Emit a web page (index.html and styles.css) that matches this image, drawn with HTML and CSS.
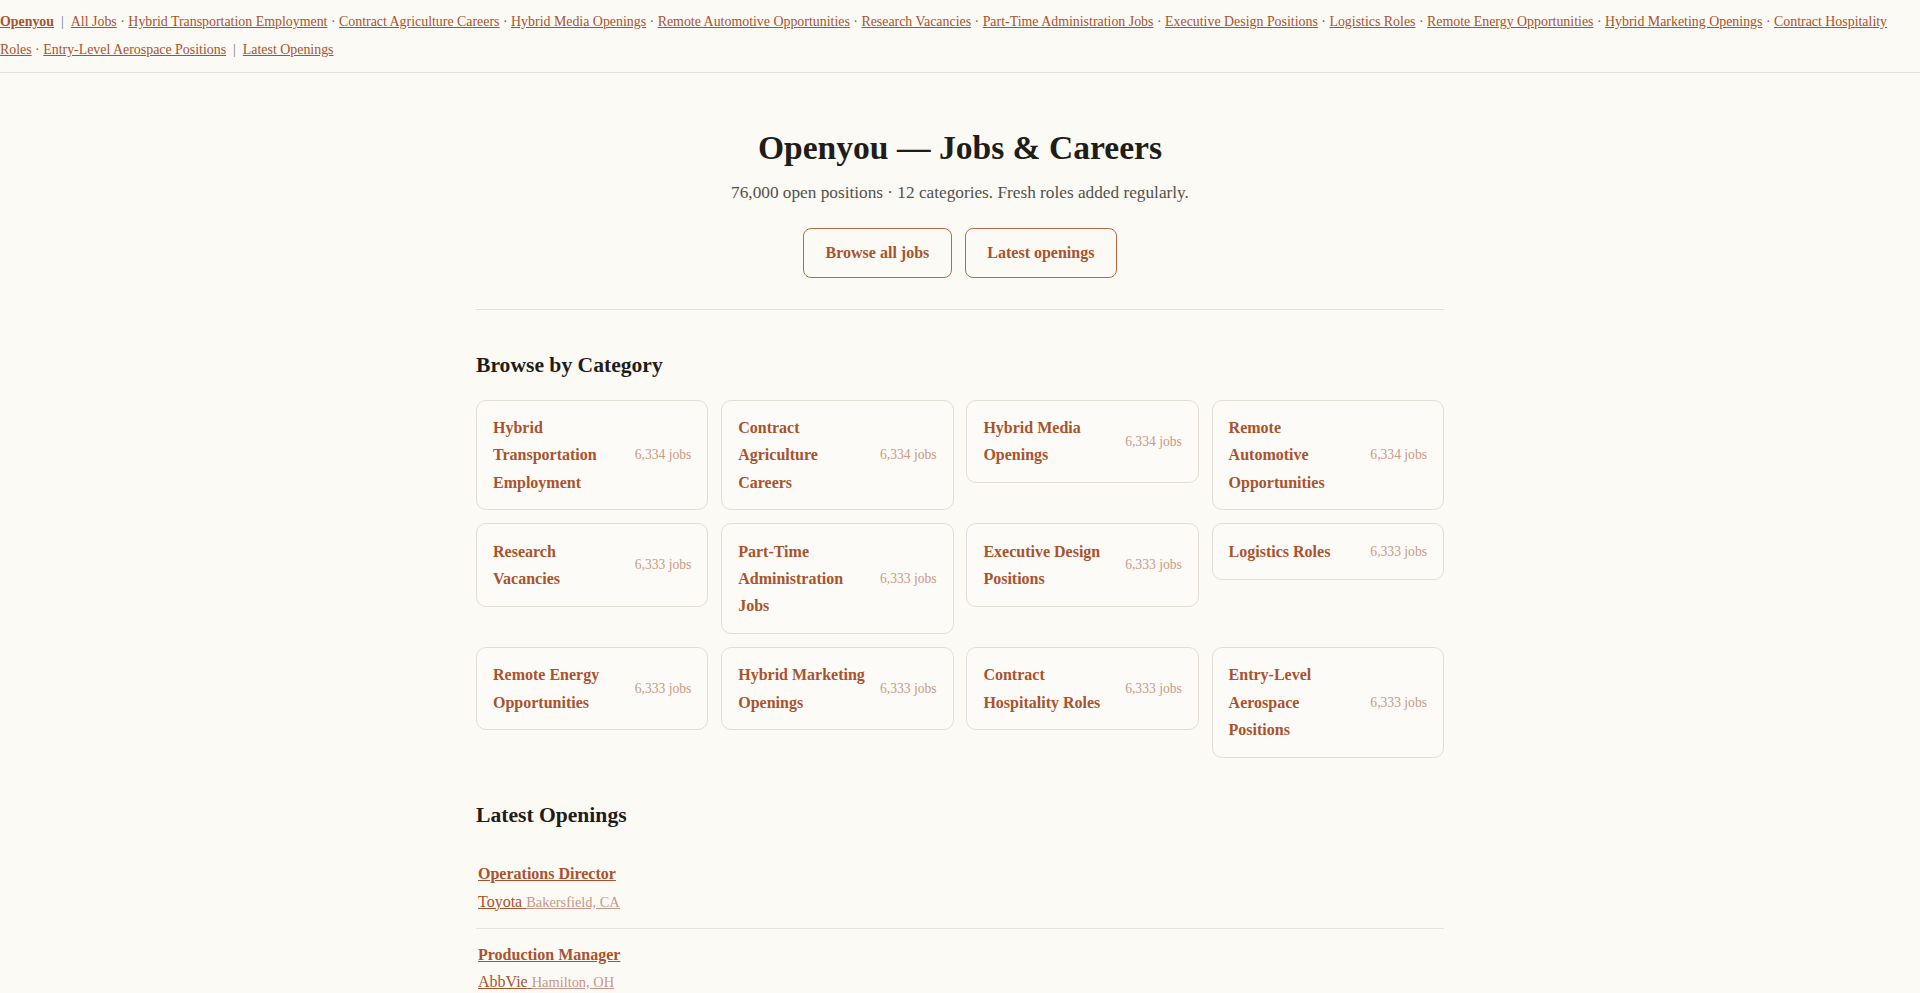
FILE: index.html
```html
<!DOCTYPE html>
<html lang="en">
<head>
<meta charset="utf-8">
<title>Openyou — Jobs &amp; Careers</title>
<link rel="stylesheet" href="styles.css">
</head>
<body>
<nav class="topnav"><a class="brand" href="#">Openyou</a><span class="sep">|</span><a href="#">All Jobs</a> · <a href="#">Hybrid Transportation Employment</a> · <a href="#">Contract Agriculture Careers</a> · <a href="#">Hybrid Media Openings</a> · <a href="#">Remote Automotive Opportunities</a> · <a href="#">Research Vacancies</a> · <a href="#">Part-Time Administration Jobs</a> · <a href="#">Executive Design Positions</a> · <a href="#">Logistics Roles</a> · <a href="#">Remote Energy Opportunities</a> · <a href="#">Hybrid Marketing Openings</a> · <a href="#">Contract Hospitality Roles</a> · <a href="#">Entry-Level Aerospace Positions</a><span class="sep">|</span><a href="#">Latest Openings</a></nav>

<main class="container">
  <header class="hero">
    <h1 class="hero-title">Openyou — Jobs &amp; Careers</h1>
    <p class="hero-sub">76,000 open positions · 12 categories. Fresh roles added regularly.</p>
    <div class="hero-actions">
      <a class="btn" href="#">Browse all jobs</a>
      <a class="btn" href="#">Latest openings</a>
    </div>
  </header>

  <section class="section">
    <h2 class="section-title">Browse by Category</h2>
    <div class="cat-grid">
      <a class="cat" href="#"><span class="cat-name">Hybrid Transportation Employment</span><span class="cat-count">6,334 jobs</span></a>
      <a class="cat" href="#"><span class="cat-name">Contract Agriculture Careers</span><span class="cat-count">6,334 jobs</span></a>
      <a class="cat" href="#"><span class="cat-name">Hybrid Media Openings</span><span class="cat-count">6,334 jobs</span></a>
      <a class="cat" href="#"><span class="cat-name">Remote Automotive Opportunities</span><span class="cat-count">6,334 jobs</span></a>
      <a class="cat" href="#"><span class="cat-name">Research Vacancies</span><span class="cat-count">6,333 jobs</span></a>
      <a class="cat" href="#"><span class="cat-name">Part-Time Administration Jobs</span><span class="cat-count">6,333 jobs</span></a>
      <a class="cat" href="#"><span class="cat-name">Executive Design Positions</span><span class="cat-count">6,333 jobs</span></a>
      <a class="cat" href="#"><span class="cat-name">Logistics Roles</span><span class="cat-count">6,333 jobs</span></a>
      <a class="cat" href="#"><span class="cat-name">Remote Energy Opportunities</span><span class="cat-count">6,333 jobs</span></a>
      <a class="cat" href="#"><span class="cat-name">Hybrid Marketing Openings</span><span class="cat-count">6,333 jobs</span></a>
      <a class="cat" href="#"><span class="cat-name">Contract Hospitality Roles</span><span class="cat-count">6,333 jobs</span></a>
      <a class="cat" href="#"><span class="cat-name">Entry-Level Aerospace Positions</span><span class="cat-count">6,333 jobs</span></a>
    </div>
  </section>

  <section class="section section-latest">
    <h2 class="section-title">Latest Openings</h2>
    <ul class="job-list">
      <li class="job"><a class="job-title" href="#">Operations Director</a><a class="job-meta" href="#"><span class="company">Toyota</span> <span class="loc">Bakersfield, CA</span></a></li>
      <li class="job"><a class="job-title" href="#">Production Manager</a><a class="job-meta" href="#"><span class="company">AbbVie</span> <span class="loc">Hamilton, OH</span></a></li>
      <li class="job"><a class="job-title" href="#">Data Analyst</a><a class="job-meta" href="#"><span class="company">Siemens</span> <span class="loc">Austin, TX</span></a></li>
      <li class="job"><a class="job-title" href="#">Marketing Coordinator</a><a class="job-meta" href="#"><span class="company">Nestlé</span> <span class="loc">Denver, CO</span></a></li>
    </ul>
  </section>
</main>
</body>
</html>
```
FILE: styles.css
```css
html, body {
  margin: 0;
  padding: 0;
}
body {
  background: #fcfaf5;
  color: #1f1d1a;
  font-family: "Liberation Serif", "Times New Roman", serif;
  font-size: 16px;
  line-height: 1.7;
}
a {
  color: #a9532e;
}

.topnav {
  font-size: 13.9px;
  line-height: 28px;
  padding: 8px 0;
  border-bottom: 1px solid #e4e0d9;
  color: #6b6560;
}
.topnav a {
  color: #a9532e;
  text-decoration: underline;
}
.topnav .brand {
  font-weight: bold;
}
.topnav .sep {
  color: #7a7570;
  margin: 0 7px;
}

.container {
  max-width: 1000px;
  margin: 0 auto;
  padding: 0 16px;
  box-sizing: border-box;
}

.hero {
  text-align: center;
  padding-top: 55px;
  padding-bottom: 31px;
  border-bottom: 1px solid #e4e0d9;
}
.hero-title {
  margin: 0;
  font-size: 33.6px;
  line-height: 1.2;
  font-weight: bold;
  color: #1f1d1a;
}
.hero-sub {
  margin: 10px 0 0;
  font-size: 17.25px;
  color: #555049;
}
.hero-actions {
  margin-top: 20px;
  display: flex;
  justify-content: center;
  gap: 13px;
}
.btn {
  display: inline-block;
  border: 1px solid #b8694a;
  border-radius: 8px;
  padding: 14px 21.5px;
  line-height: 20px;
  font-weight: bold;
  color: #a9532e;
  text-decoration: none;
}

.section {
  padding-top: 43px;
}
.section-title {
  margin: 0 0 21px;
  font-size: 21.6px;
  line-height: 1.2;
  font-weight: bold;
  color: #1f1d1a;
}
.section-latest {
  padding-top: 45px;
}
.section-latest .section-title {
  margin-bottom: 20px;
}

.cat-grid {
  display: grid;
  grid-template-columns: repeat(4, 1fr);
  gap: 12.8px;
  align-items: start;
}
.cat {
  display: flex;
  align-items: center;
  justify-content: space-between;
  gap: 12px;
  padding: 13.6px 16px;
  border: 1px solid #e3ddd6;
  border-radius: 10px;
  background: #fdfbf7;
  text-decoration: none;
}
.cat-name {
  font-weight: bold;
  color: #a9532e;
  line-height: 27.2px;
}
.cat-count {
  flex-shrink: 0;
  font-size: 13.6px;
  color: #c99a86;
  white-space: nowrap;
}

.job-list {
  list-style: none;
  margin: 0;
  padding: 0;
}
.job {
  padding: 12px 2px;
  border-bottom: 1px solid #e6e2dc;
}
.job-title {
  display: block;
  font-weight: bold;
  line-height: 27.2px;
  color: #a9532e;
}
.job-meta {
  display: block;
  line-height: 27.2px;
  color: #a9532e;
}
.job-meta .company {
  color: #a9532e;
}
.job-meta .loc {
  font-size: 14.4px;
  color: #c8968a;
  text-decoration: underline;
}
```
